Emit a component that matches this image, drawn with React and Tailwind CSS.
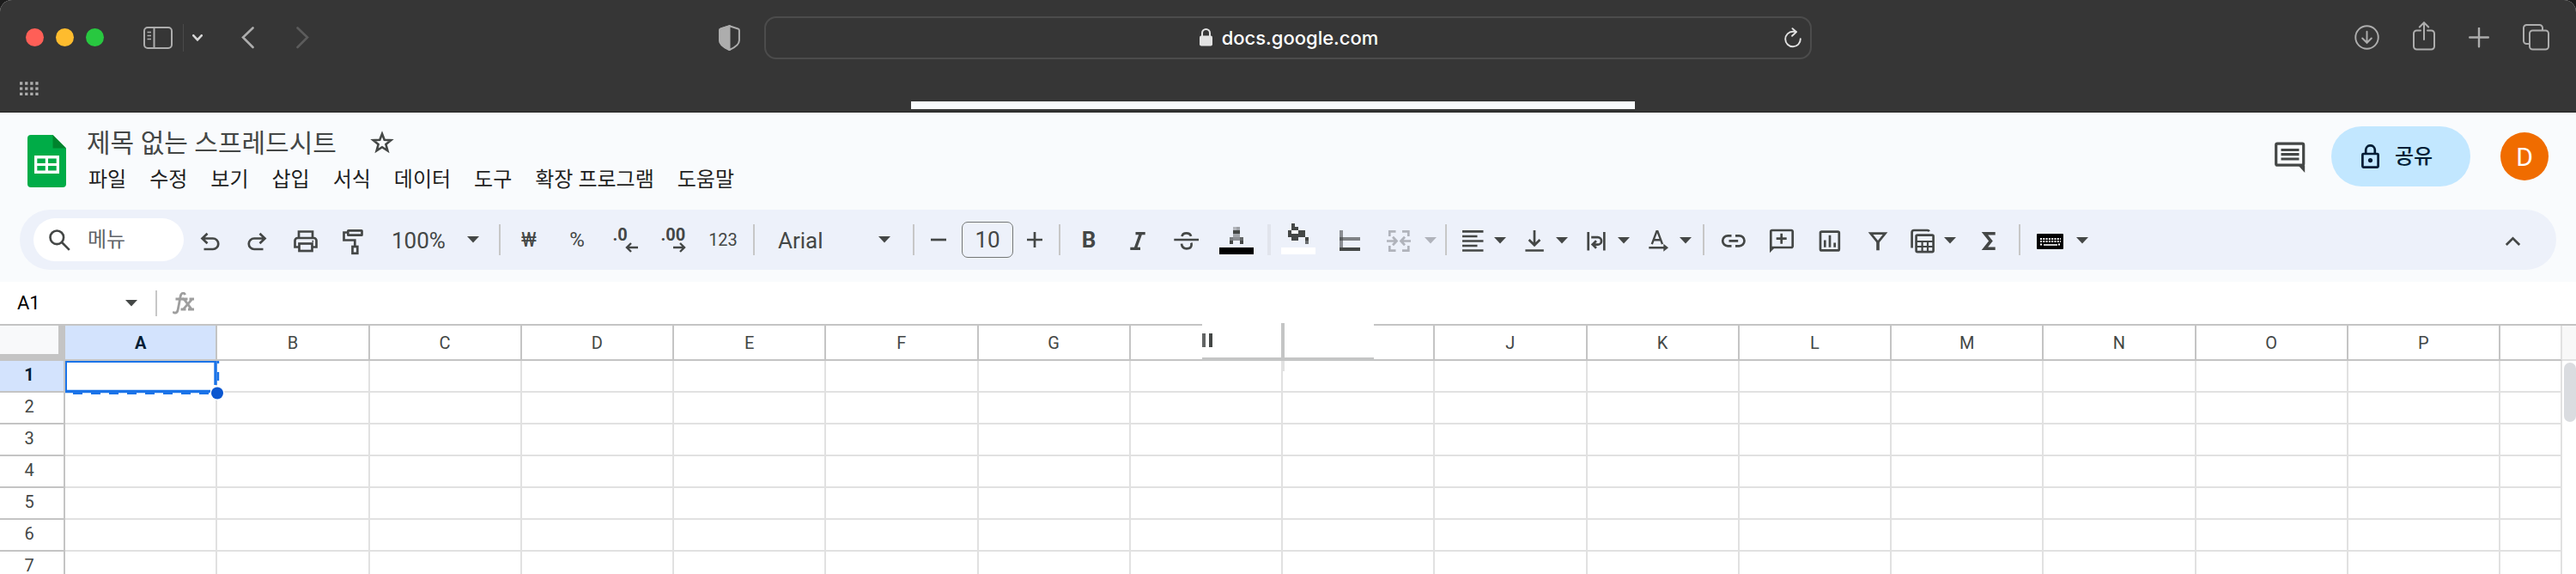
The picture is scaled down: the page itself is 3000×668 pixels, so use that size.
import React, { useState } from 'react';

const menus = [
  '파일',
  '수정',
  '보기',
  '삽입',
  '서식',
  '데이터',
  '도구',
  '확장 프로그램',
  '도움말',
];

const columns = 'ABCDEFGHIJKLMNOP'.split('');
const rows = [1, 2, 3, 4, 5, 6, 7];

// toolbar glyphs, all drawn on a 36 x 36 box
const icons = {
  undo: <path d="M9.5 16.5H22a6.2 6.2 0 0 1 0 12.5H11.5M15.5 10.8l-6 5.7 6 5.7" />,
  redo: <path d="M26.5 16.5H14a6.2 6.2 0 0 0 0 12.5h10.5M20.5 10.8l6 5.7-6 5.7" />,
  print: (
    <>
      <path d="M10 26.5H5.5V19a3 3 0 0 1 3-3h19a3 3 0 0 1 3 3v7.5H26M10 16V8.5h16V16" />
      <rect x="10.5" y="22.5" width="15" height="8.5" />
      <path d="M25.5 19.8h1.6" strokeWidth="2" />
    </>
  ),
  paint: (
    <>
      <rect x="11.3" y="7.3" width="16.2" height="5.4" rx="0.5" />
      <path d="M11 9.5H6.5v9h12.8V25" />
      <rect x="16.5" y="26" width="5.8" height="7.8" />
    </>
  ),
  minus: <path d="M9 18h18" />,
  plus: <path d="M9 18h18M18 9v18" />,
  italic: <path d="M16.5 10.6h11.2M10.3 28.4H22M22.6 10.6l-6.4 17.8" strokeWidth="3.4" />,
  strike: (
    <path d="M5.3 18H34M14.6 14.2c.2-2.6 2-3.9 5.1-3.9 2.9 0 4.7 1.2 5.4 3.5M14 22.6c.4 3.7 2.4 5.7 5.9 5.7 3.6 0 5.7-1.8 5.7-4.6 0-.8-.1-1.4-.4-2" />
  ),
  merge: (
    <path d="M7.3 14V8.4h7.2M22 8.4h7.3V14M7.3 25v5.6h7.2M22 30.6h7.3V25M4 19.5h10.5M11 14.8l4.5 4.7-4.5 4.7M32 19.5H21.5M25 14.8l-4.5 4.7 4.5 4.7" />
  ),
  alignLeft: <path d="M6 8.3h24.5M6 14h17.5M6 19.5h24.5M6 25h17.5M6 30.5h24.5" />,
  alignBottom: <path d="M18 7v17M11.6 18l6.4 6.3 6.4-6.3M7.4 30.5h21.4" />,
  wrap: (
    <path d="M8.7 9v21.5M27.3 9v21.5M12.2 15.2h7.6a4.2 4.2 0 0 1 0 8.4h-5.5M18 19.3l-4.3 4.3 4.3 4.2" />
  ),
  rotate: (
    <>
      <path d="M10.8 23.2l5.6-15h1l5.6 15M12.8 18.3h8.2M7.3 27.3H26" strokeWidth="2.4" />
      <path d="M24.3 22.8l5.7 4.5-5.7 4.5z" fill="currentColor" stroke="none" />
    </>
  ),
  link: <path d="M16.5 13.3h-4.3a6 6 0 0 0 0 12h4.3M21 13.3h4.5a6 6 0 0 1 0 12H21M13.5 19.3h10.7" />,
  addComment: (
    <>
      <path d="M6.3 28.5V8.5A1.5 1.5 0 0 1 7.8 7h22.4a1.5 1.5 0 0 1 1.5 1.5v17a1.5 1.5 0 0 1-1.5 1.5H7M18.7 10.7v12M12.7 16.7h12" />
      <path d="M5 33.3V26h7z" fill="currentColor" stroke="none" />
    </>
  ),
  chart: (
    <>
      <rect x="8" y="8.6" width="21.8" height="21.8" rx="1.5" />
      <path d="M13.3 18.5v8.2M19 12.7v14M24.7 21.5v5.2" />
    </>
  ),
  filter: (
    <>
      <path d="M10.5 10.6h17L19 21z" />
      <path d="M19 20v10.3" strokeWidth="3.6" />
    </>
  ),
  tableViews: (
    <>
      <path d="M5.6 27.5V9.5A2.5 2.5 0 0 1 8.1 7h15.7a2.5 2.5 0 0 1 2 1.2" />
      <rect x="10.6" y="12.6" width="20" height="19.5" rx="1.5" />
      <path d="M10.6 20h20M10.6 26h20M17.6 20v12M24 20v12" strokeWidth="2.2" />
    </>
  ),
  sum: <path d="M25.7 10.8H13.5l7 8.7-7 8.7h12.2" strokeWidth="3.6" />,
  keyboard: (
    <>
      <rect x="2" y="11" width="31" height="18" rx="1" fill="#000" stroke="none" />
      <path
        d="M6 17h24M6 20h24M6 23.5h3M27 23.5h3"
        stroke="#fff"
        strokeWidth="1.8"
        strokeDasharray="2 1.3"
      />
      <path d="M10 24h16" stroke="#fff" strokeWidth="1.6" />
    </>
  ),
  collapse: <path d="M10.8 24l7.7-7.7 7.7 7.7" />,
};

const Icon = ({ name }) => (
  <svg
    className="size-9 shrink-0"
    viewBox="0 0 36 36"
    fill="none"
    stroke="currentColor"
    strokeWidth="2.7"
    aria-hidden="true"
  >
    {icons[name]}
  </svg>
);

const Caret = () => (
  <svg className="h-2 w-3.5 shrink-0" viewBox="0 0 14 8" aria-hidden="true">
    <path d="M0 0h14L7 7.5z" fill="currentColor" />
  </svg>
);

const Tool = ({ icon, label }) => (
  <button type="button" aria-label={label} className="flex w-14 shrink-0 justify-center">
    <Icon name={icon} />
  </button>
);

const DropTool = ({ icon, label }) => (
  <button type="button" aria-label={label} className="flex w-[72px] shrink-0 items-center pl-[7px]">
    <Icon name={icon} />
    <span className="ml-[7px] pt-0.5">
      <Caret />
    </span>
  </button>
);

const Divider = () => (
  <div className="flex w-3 shrink-0 justify-center">
    <div className="h-9 w-0.5 bg-[#c7c7c7]" />
  </div>
);

const Decimal = ({ text, label, arrow }) => (
  <button type="button" aria-label={label} className="flex w-14 shrink-0 justify-center">
    <span className="flex w-[29px] flex-col">
      <span className="text-left text-[20px] leading-[18px] font-bold">{text}</span>
      <svg className="h-3 w-[15px] self-end" viewBox="0 0 15 12" fill="none" stroke="currentColor" strokeWidth="2.4">
        <path d={arrow} />
      </svg>
    </span>
  </button>
);

const BrowserBar = () => (
  <header className="relative border-b border-[#222] bg-[#363636] text-[#adadad]">
    <div className="grid h-[87px] grid-cols-[890fr_1220fr_890fr] items-center">
      <div className="flex items-center pr-7 pl-[30px]">
        <div className="flex gap-3.5">
          <button type="button" aria-label="닫기" className="size-[21px] rounded-full bg-[#ff5f57]" />
          <button type="button" aria-label="최소화" className="size-[21px] rounded-full bg-[#febc2e]" />
          <button type="button" aria-label="확대" className="size-[21px] rounded-full bg-[#28c840]" />
        </div>
        <button type="button" aria-label="사이드바" className="ml-[46px]">
          <svg className="h-[26px] w-[34px]" viewBox="0 0 34 26" fill="none" stroke="currentColor" strokeWidth="2">
            <rect x="1" y="1" width="32" height="24" rx="4" />
            <path d="M12.5 1v24" />
            <path d="M4.5 6.5h4.5M4.5 10.5h4.5M4.5 14.5h4.5" strokeWidth="1.4" />
          </svg>
        </button>
        <div className="ml-3 h-8 w-px bg-[#4a4a4a]" />
        <button type="button" aria-label="탭 그룹" className="ml-2.5">
          <svg className="h-2 w-3" viewBox="0 0 12 8" fill="none" stroke="#d6d6d6" strokeWidth="2.6" strokeLinecap="round">
            <path d="M1.3 1.3L6 6.3l4.7-5" />
          </svg>
        </button>
        <button type="button" aria-label="뒤로" className="ml-[45px]">
          <svg className="h-[26px] w-[15px]" viewBox="0 0 15 26" fill="none" stroke="currentColor" strokeWidth="2.6" strokeLinecap="round">
            <path d="M13.5 1.5L2 12.5l11.5 11.5" />
          </svg>
        </button>
        <button type="button" aria-label="앞으로" className="ml-[49px] text-[#5c5c5c]">
          <svg className="h-[26px] w-[15px]" viewBox="0 0 15 26" fill="none" stroke="currentColor" strokeWidth="2.6" strokeLinecap="round">
            <path d="M1.5 1.5L13 12.5 1.5 24" />
          </svg>
        </button>
        <button type="button" aria-label="개인정보 보호 리포트" className="ml-auto">
          <svg className="h-[30px] w-[25px]" viewBox="0 0 25 30" fill="none" stroke="currentColor" strokeWidth="2">
            <path d="M12.5 1.2L22.5 4.5a2 2 0 0 1 1.4 2V18c0 5-5 8.3-11.4 11C6.1 26.3 1.1 23 1.1 18V6.5a2 2 0 0 1 1.4-2z" />
            <path d="M12.5 1.2V29C6.1 26.3 1.1 23 1.1 18V6.5a2 2 0 0 1 1.4-2z" fill="currentColor" />
          </svg>
        </button>
      </div>
      <div className="flex h-[50px] items-center rounded-[14px] border-2 border-[#4c4c4c] pr-2.5">
        <div className="flex flex-1 items-center justify-center gap-[11px] pl-8">
          <svg className="h-[21px] w-[15px]" viewBox="0 0 15 21" fill="none" stroke="#e2e2e2" strokeWidth="2">
            <path d="M3 9V5.5a4.5 4.5 0 0 1 9 0V9" />
            <rect x="0" y="8.5" width="15" height="12" rx="2" fill="#e2e2e2" stroke="none" />
          </svg>
          <input
            aria-label="주소"
            defaultValue="docs.google.com"
            className="field-sizing-content bg-transparent font-['Inter'] text-[22px] leading-8 font-medium text-white outline-none"
          />
        </div>
        <button type="button" aria-label="새로고침">
          <svg className="h-6 w-5" viewBox="0 0 20 24" fill="none" stroke="#e2e2e2" strokeWidth="1.9" strokeLinecap="round" strokeLinejoin="round">
            <path d="M18.8 13.3a8.8 8.8 0 1 1-8.8-8.6h3.8M9.5 1.2l4.6 3.9-5 4.7" />
          </svg>
        </button>
      </div>
      <div className="flex items-center justify-end gap-[39px] pr-[31px]">
        <button type="button" aria-label="다운로드">
          <svg className="size-[29px]" viewBox="0 0 30 30" fill="none" stroke="currentColor" strokeWidth="2">
            <circle cx="15" cy="15" r="13.7" />
            <path d="M15 8v13M9.5 16l5.5 5.5 5.5-5.5" strokeLinecap="round" />
          </svg>
        </button>
        <button type="button" aria-label="공유하기" className="pb-1">
          <svg className="h-[34px] w-[26px]" viewBox="0 0 26 34" fill="none" stroke="currentColor" strokeWidth="2" strokeLinecap="round">
            <path d="M9 10.5H4.5A3.5 3.5 0 0 0 1 14V29a3.5 3.5 0 0 0 3.5 3.5h17A3.5 3.5 0 0 0 25 29V14a3.5 3.5 0 0 0-3.5-3.5H17M13 21V1.5M7.8 6.5L13 1.3l5.2 5.2" />
          </svg>
        </button>
        <button type="button" aria-label="새로운 탭">
          <svg className="size-6" viewBox="0 0 24 24" fill="none" stroke="currentColor" strokeWidth="2.4" strokeLinecap="round">
            <path d="M1.2 11.5h21.6M12 .8v21.5" />
          </svg>
        </button>
        <button type="button" aria-label="탭 개요">
          <svg className="size-[31px]" viewBox="0 0 31 31" fill="none" stroke="currentColor" strokeWidth="2">
            <path d="M8 23H4.5A3.5 3.5 0 0 1 1 19.5v-15A3.5 3.5 0 0 1 4.5 1h15A3.5 3.5 0 0 1 23 4.5V7.5" />
            <rect x="8" y="7.5" width="22" height="22" rx="3.5" />
          </svg>
        </button>
      </div>
    </div>
    <div className="flex h-[43px] items-start pt-2 pl-[23px]">
      <button type="button" aria-label="즐겨찾기">
        <svg className="h-[17px] w-[22px]" viewBox="0 0 22 17" stroke="currentColor" strokeWidth="3.3" strokeDasharray="3.3 2.8">
          <path d="M0 2h22M0 8.2h22M0 14.4h22" />
        </svg>
      </button>
    </div>
    <div className="absolute bottom-[3px] left-[35.37%] h-[9px] w-[28.1%] bg-[#f9fbfd]" />
  </header>
);

const DocHeader = () => {
  const [title, setTitle] = useState('제목 없는 스프레드시트');

  return (
    <div className="flex h-[113px] items-start px-8 pt-4">
      <a href="#home" aria-label="스프레드시트 홈" className="mt-2.5">
        <svg className="h-[61px] w-[45px]" viewBox="0 0 45 61">
          <path d="M4 0h25.5L45 15.5V57a4 4 0 0 1-4 4H4a4 4 0 0 1-4-4V4a4 4 0 0 1 4-4z" fill="#00ac47" />
          <path d="M29.5 0L45 15.5H29.5z" fill="#00832d" />
          <path d="M8 24h29v21H8z" fill="#fff" />
          <path d="M11.3 27.5h9.5v5.4h-9.5zM24 27.5h9.7v5.4H24zM11.3 36h9.5v5.4h-9.5zM24 36h9.7v5.4H24z" fill="#00ac47" />
        </svg>
      </a>
      <div className="ml-6">
        <div className="flex h-[38px] items-center">
          <input
            aria-label="이름 바꾸기"
            value={title}
            onChange={(e) => setTitle(e.target.value)}
            className="h-[38px] w-[330px] bg-transparent text-[30px] text-[#444746] outline-none"
          />
          <button type="button" aria-label="별표">
            <svg className="size-7" viewBox="0 0 28 28" fill="none" stroke="#444746" strokeWidth="2.6">
              <path d="M14 3.8l2.7 7 7.6.4-5.9 4.8 2 7.4L14 19.2l-6.4 4.2 2-7.4-5.9-4.8 7.6-.4z" />
            </svg>
          </button>
        </div>
        <nav className="mt-2 flex h-8 items-center gap-[27px] pl-0.5 text-[24px] text-[#1f1f1f]">
          {menus.map((m) => (
            <button key={m} type="button" className="whitespace-nowrap">
              {m}
            </button>
          ))}
        </nav>
      </div>
      <div className="ml-auto flex items-start">
        <button type="button" aria-label="댓글" className="mt-[18px]">
          <svg className="h-9 w-9" viewBox="0 0 36 36" fill="none" stroke="#444746" strokeWidth="3.2">
            <rect x="1.7" y="2.2" width="32" height="25" rx="1.5" />
            <path d="M7.5 9.5h21M7.5 14.7h21M7.5 20h21" />
            <path d="M27.5 27.5h7.7V36z" fill="#444746" stroke="none" />
          </svg>
        </button>
        <button
          type="button"
          className="ml-[30px] flex h-[70px] w-[162px] items-center gap-[18px] rounded-full bg-[#c2e7ff] pl-[35px] text-[24px] font-medium text-[#001d35]"
        >
          <svg className="h-7 w-[21px]" viewBox="0 0 21 28" fill="none" stroke="currentColor" strokeWidth="2.7">
            <path d="M5.2 11V6.6a5.3 5.3 0 0 1 10.6 0V11" />
            <rect x="1.4" y="11" width="18.2" height="15.6" rx="1" />
            <circle cx="10.5" cy="18.6" r="2.6" fill="currentColor" stroke="none" />
          </svg>
          공유
        </button>
        <button
          type="button"
          aria-label="계정"
          className="mt-[7px] ml-[35px] size-14 rounded-full bg-[#f06c00] text-[30px] text-white"
        >
          D
        </button>
      </div>
    </div>
  );
};

const Toolbar = () => (
  <div className="mx-[23px] flex h-[70px] items-center rounded-full bg-[#edf1fa] pl-4 text-[#444746]">
    <label className="mr-0.5 flex h-[50px] w-[175px] shrink-0 items-center gap-5 rounded-full bg-white pl-[18px]">
      <svg className="size-[25px] shrink-0" viewBox="0 0 25 25" fill="none" stroke="currentColor" strokeWidth="2.6">
        <circle cx="9.3" cy="9.3" r="7.8" />
        <path d="M15 15l8.8 8.8" />
      </svg>
      <input
        aria-label="메뉴 검색"
        placeholder="메뉴"
        className="w-24 bg-transparent text-[24px] outline-none placeholder:text-[#5f6368]"
      />
    </label>
    <Tool icon="undo" label="실행취소" />
    <Tool icon="redo" label="재실행" />
    <Tool icon="print" label="인쇄" />
    <Tool icon="paint" label="서식 복사" />
    <label className="relative flex w-[136px] shrink-0 items-center">
      <select aria-label="확대/축소" className="h-9 w-full appearance-none pl-4 text-[26px] outline-none">
        <option>100%</option>
      </select>
      <span className="pointer-events-none absolute right-[18px]">
        <Caret />
      </span>
    </label>
    <Divider />
    <button type="button" className="w-14 shrink-0 text-[24px]">₩</button>
    <button type="button" className="w-14 shrink-0 text-[24px]">%</button>
    <Decimal text=".0" label="소수점 이하 자릿수 감소" arrow="M15 6H2.5M7 1L2 6l5 5" />
    <Decimal text=".00" label="소수점 이하 자릿수 증가" arrow="M0 6h12.5M8 1l5 5-5 5" />
    <button type="button" className="w-[60px] shrink-0 text-[20px]">123</button>
    <Divider />
    <label className="relative flex w-[174px] shrink-0 items-center">
      <select aria-label="글꼴" className="h-9 w-full appearance-none pl-[22px] text-[26px] outline-none">
        <option>Arial</option>
      </select>
      <span className="pointer-events-none absolute right-[21px]">
        <Caret />
      </span>
    </label>
    <Divider />
    <button type="button" aria-label="글꼴 크기 줄이기" className="flex w-[46px] shrink-0 justify-center">
      <Icon name="minus" />
    </button>
    <input
      aria-label="글꼴 크기"
      defaultValue="10"
      className="mr-0.5 ml-1 h-[42px] w-[60px] shrink-0 rounded-[7px] border border-[#747775] bg-transparent text-center text-[26px] outline-none"
    />
    <button type="button" aria-label="글꼴 크기 늘리기" className="flex w-[46px] shrink-0 justify-center">
      <Icon name="plus" />
    </button>
    <Divider />
    <button type="button" aria-label="굵게" className="w-14 shrink-0 text-[26px] font-bold">B</button>
    <Tool icon="italic" label="기울임꼴" />
    <Tool icon="strike" label="취소선" />
    <button type="button" aria-label="텍스트 색상" className="flex w-16 shrink-0 justify-center">
      <svg className="size-10" viewBox="0 0 40 40" shapeRendering="crispEdges">
        <path d="M16 5h4v4h-4z" fill="#b3b6bc" />
        <path d="M20 5h4v4h-4zM16 13h8v4h-8z" fill="#a0a3a8" />
        <path d="M16 9h8v4h-8zM12 21h4v4h-4zM24 21h4v4h-4z" fill="#444746" />
        <path d="M12 17h4v4h-4z" fill="#777a7e" />
        <path d="M16 17h8v4h-8z" fill="#8a8d92" />
        <path d="M24 17h4v4h-4z" fill="#626567" />
        <path d="M0 29h40v8H0z" fill="#000" />
      </svg>
    </button>
    <div className="flex w-3 shrink-0 justify-center">
      <div className="h-9 w-1 bg-[#e1e4ec]" />
    </div>
    <button type="button" aria-label="채우기 색상" className="flex w-14 shrink-0 justify-center">
      <svg className="size-10" viewBox="0 0 40 40" shapeRendering="crispEdges">
        <path d="M12 1h4v4h4v4h-8zM8 9h4v4h8V9h8v8h-8v4h-8v-4H8zM28 17h4v4h-4z" fill="#444746" />
        <path d="M12 9h8v4h-8z" fill="#fff" />
        <path d="M28 21h4v4h-4z" fill="#6a6d70" />
        <path d="M0 29h40v8H0z" fill="#fff" />
      </svg>
    </button>
    <button type="button" aria-label="테두리" className="flex w-16 shrink-0 justify-center">
      <svg className="size-10" viewBox="0 0 40 40" shapeRendering="crispEdges">
        <path d="M8 9h4v20H8z" fill="#8a8d92" />
        <path d="M12 17h20v4H12z" fill="#7f8285" />
        <path d="M8 17h4v4H8z" fill="#5a5d60" />
        <path d="M8 29h24v4H8z" fill="#444746" />
      </svg>
    </button>
    <button
      type="button"
      aria-label="셀 병합"
      disabled
      className="flex w-[74px] shrink-0 items-center pl-[7px] text-[#b0b3bb]"
    >
      <Icon name="merge" />
      <span className="ml-3 pt-0.5">
        <Caret />
      </span>
    </button>
    <Divider />
    <DropTool icon="alignLeft" label="가로 맞춤" />
    <DropTool icon="alignBottom" label="세로 맞춤" />
    <DropTool icon="wrap" label="텍스트 줄바꿈" />
    <DropTool icon="rotate" label="텍스트 회전" />
    <Divider />
    <Tool icon="link" label="링크 삽입" />
    <Tool icon="addComment" label="댓글 삽입" />
    <Tool icon="chart" label="차트 삽입" />
    <Tool icon="filter" label="필터 만들기" />
    <DropTool icon="tableViews" label="필터 보기" />
    <button type="button" aria-label="함수" className="flex w-[60px] shrink-0 justify-center">
      <Icon name="sum" />
    </button>
    <Divider />
    <button type="button" aria-label="입력 도구" className="flex shrink-0 items-center pl-3">
      <Icon name="keyboard" />
      <span className="ml-3 pt-0.5">
        <Caret />
      </span>
    </button>
    <button type="button" aria-label="메뉴 숨기기" className="mr-[23px] ml-auto flex w-14 shrink-0 justify-center">
      <Icon name="collapse" />
    </button>
  </div>
);

const FormulaBar = () => (
  <div className="flex h-[49px] items-center bg-white text-[#444746]">
    <input
      aria-label="이름 상자"
      defaultValue="A1"
      className="w-[146px] bg-transparent pl-5 text-[22px] text-black outline-none"
    />
    <button type="button" aria-label="이름이 지정된 범위" className="flex">
      <Caret />
    </button>
    <div className="ml-[21px] h-[30px] w-0.5 bg-[#c7c7c7]" />
    <svg className="ml-[18px] h-[26px] w-[26px]" viewBox="0 0 26 26" fill="none" stroke="#9e9e9e" strokeWidth="2.8">
      <path d="M14.5 3.2c-.4-1.6-1.6-2.2-2.7-2-1.7.3-2.3 1.9-2.7 4L6.3 20c-.5 2.6-1.5 4.2-3.3 4.2-1.2 0-2-.7-2.2-1.8M3.5 8h9.5" />
      <path d="M11.5 8h6M19.5 8H25M9.5 20h6M18 20h7M13.5 8.3l8.5 11.5M22.5 8.3L12.5 19.8" />
    </svg>
    <input aria-label="수식 입력줄" className="h-full flex-1 bg-transparent pl-4 text-[22px] outline-none" />
  </div>
);

const Selection = () => (
  <svg
    className="pointer-events-none absolute top-0 left-0 h-10 w-[177px] overflow-visible"
    viewBox="0 0 177 40"
    aria-hidden="true"
  >
    <path d="M1 35V1h174" fill="none" stroke="#1a73e8" strokeWidth="2" />
    <path d="M0 35.5h169M175 0v28" fill="none" stroke="#1a73e8" strokeWidth="3.4" />
    <path d="M0 38h169" stroke="#1a73e8" strokeWidth="2" strokeDasharray="11 10" strokeDashoffset="12" />
    <path d="M178 0v3M178 13v10" stroke="#1a73e8" strokeWidth="2.4" />
    <circle cx="177" cy="37.5" r="8.5" fill="#fff" />
    <circle cx="177" cy="37.5" r="7" fill="#0b57d0" />
  </svg>
);

// coarse strip lying over the H / I headings
const HeaderStrip = () => (
  <svg
    className="absolute -top-[3px] left-[83px] z-10 h-14 w-[200px]"
    viewBox="0 0 200 56"
    shapeRendering="crispEdges"
    aria-hidden="true"
  >
    <path d="M0 0h200v44H0z" fill="#fff" />
    <path d="M0 40h200v4H0zM92 0h4v44h-4z" fill="#c4c5c5" />
    <path d="M92 44h4v12h-4z" fill="#e1e1e1" />
    <path d="M0 12h4v16H0z" fill="#626464" />
    <path d="M8 12h4v16H8z" fill="#444746" />
  </svg>
);

const Sheet = () => (
  <div className="flex bg-white">
    <table className="w-0 flex-1 table-fixed border-separate border-spacing-0 border-t-2 border-[#c4c4c4] text-[20px] text-[#444746]">
      <colgroup>
        <col className="w-[76px]" />
        {columns.map((c) => (
          <col key={c} />
        ))}
        <col className="w-[72px]" />
      </colgroup>
      <thead>
        <tr className="h-[41px]">
          <th aria-label="모두 선택" className="border-r-8 border-b-8 border-[#c4c4c4] bg-[#f8f9fa] p-0" />
          {columns.map((c) => (
            <th
              key={c}
              className={
                c === 'A'
                  ? 'border-r-2 border-b-2 border-[#c4c4c4] bg-[#d3e3fd] p-0 font-bold text-[#001d35]'
                  : 'relative border-r-2 border-b-2 border-[#c4c4c4] p-0 font-normal'
              }
            >
              {c === 'H' && <HeaderStrip />}
              {c !== 'H' && c !== 'I' && c}
            </th>
          ))}
          <th aria-label="Q" className="border-r-2 border-b-2 border-r-[#e1e1e1] border-b-[#c4c4c4] p-0" />
        </tr>
      </thead>
      <tbody>
        {rows.map((r) => (
          <tr key={r} className="h-[37px]">
            <th
              className={
                r === 1
                  ? 'border-r-2 border-b-2 border-[#c4c4c4] bg-[#d3e3fd] p-0 font-bold text-[#001d35]'
                  : 'border-r-2 border-b-2 border-[#c4c4c4] p-0 font-normal'
              }
            >
              <span className="block pr-1.5 pb-1 leading-4">{r}</span>
            </th>
            {columns.map((c) =>
              r === 1 && c === 'A' ? (
                <td key={c} className="relative z-10 border-r-2 border-b-2 border-[#e1e1e1] p-0">
                  <Selection />
                </td>
              ) : (
                <td key={c} className="border-r-2 border-b-2 border-[#e1e1e1] p-0" />
              )
            )}
            <td className="border-r-2 border-b-2 border-[#e1e1e1] p-0" />
          </tr>
        ))}
      </tbody>
    </table>
    <div className="w-4 shrink-0 border-t-2 border-[#c4c4c4]">
      <div className="h-[41px] border-b-2 border-[#e1e1e1] bg-[#f8f8f8]" />
      <div className="mt-0.5 ml-0.5 h-[69px] w-3.5 rounded-full bg-[#dadce0]" />
    </div>
  </div>
);

export default function App() {
  return (
    <div className="h-screen overflow-hidden bg-[#1c1c1c] font-['Roboto','Noto_Sans_CJK_KR',sans-serif]">
      <div className="min-h-full overflow-hidden rounded-t-[14px] bg-white">
        <BrowserBar />
        <main>
          <div className="bg-[#f9fbfd] pb-3.5">
            <DocHeader />
            <Toolbar />
          </div>
          <FormulaBar />
          <Sheet />
        </main>
      </div>
    </div>
  );
}
